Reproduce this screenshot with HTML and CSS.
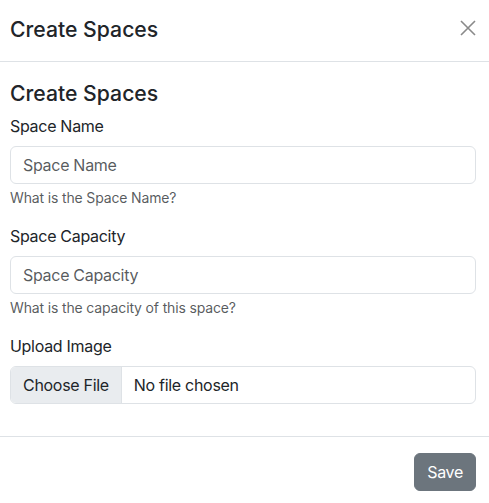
FILE: index.html
```html
<!DOCTYPE html>
<html lang="en">
<head>
<meta charset="utf-8">
<title>Create Spaces</title>
<link rel="stylesheet" href="styles.css">
</head>
<body>
<div class="modal">
  <div class="modal-header">
    <h5 class="modal-title">Create Spaces</h5>
    <button type="button" class="btn-close" aria-label="Close">
      <svg viewBox="0 0 16 16" width="16" height="16"><path d="M1 1 L15 15 M15 1 L1 15" stroke="currentColor" stroke-width="1.6" fill="none"/></svg>
    </button>
  </div>
  <div class="modal-body">
    <h4 class="section-title">Create Spaces</h4>
    <div class="field">
      <label class="form-label" for="name">Space Name</label>
      <input class="form-control" id="name" type="text" placeholder="Space Name">
      <div class="form-text">What is the Space Name?</div>
    </div>
    <div class="field">
      <label class="form-label" for="cap">Space Capacity</label>
      <input class="form-control" id="cap" type="text" placeholder="Space Capacity">
      <div class="form-text">What is the capacity of this space?</div>
    </div>
    <div class="field">
      <label class="form-label">Upload Image</label>
      <div class="file-control">
        <span class="file-btn">Choose File</span>
        <span class="file-name">No file chosen</span>
      </div>
    </div>
  </div>
  <div class="modal-footer">
    <button type="button" class="btn-save">Save</button>
  </div>
</div>
</body>
</html>
```
FILE: styles.css
```css
* { box-sizing: border-box; }
html, body {
  margin: 0;
  background: #fff;
}
body {
  font-family: Inter, "Liberation Sans", sans-serif;
  color: #212529;
  font-size: 16px;
  line-height: 1.5;
  letter-spacing: -0.3px;
}
.modal {
  width: 489px;
}
.modal-header {
  display: flex;
  align-items: flex-start;
  justify-content: space-between;
  height: 62px;
  padding: 14px 13px 0 10px;
  border-bottom: 1px solid #dee2e6;
}
.modal-title {
  margin: 0;
  font-size: 21.2px;
  font-weight: 500;
  line-height: 30px;
  letter-spacing: 0;
}
.btn-close {
  margin-top: 6px;
  padding: 0;
  border: 0;
  background: none;
  width: 16px;
  height: 16px;
  color: #8a8a8a;
  display: flex;
  cursor: pointer;
}
.modal-body {
  padding: 19px 13px 16px 10px;
}
.section-title {
  margin: 0 0 9px;
  font-size: 21.2px;
  font-weight: 500;
  line-height: 24px;
  letter-spacing: 0;
}
.field {
  margin-bottom: 16px;
}
.form-label {
  display: block;
  margin-bottom: 8px;
  line-height: 24px;
}
.form-control {
  display: block;
  width: 100%;
  height: 38px;
  padding: 6px 12px;
  font: inherit;
  letter-spacing: inherit;
  color: #212529;
  border: 1px solid #dee2e6;
  border-radius: 6px;
  background: #fff;
}
.form-control::placeholder {
  color: rgba(33, 37, 41, 0.75);
}
.form-text {
  margin-top: 3px;
  font-size: 14px;
  line-height: 21px;
  letter-spacing: -0.15px;
  color: rgba(33, 37, 41, 0.75);
}
.file-control {
  display: flex;
  height: 38px;
  border: 1px solid #dee2e6;
  border-radius: 6px;
  overflow: hidden;
}
.file-btn {
  display: flex;
  align-items: center;
  padding: 0 12px;
  background: #e9ecef;
  border-right: 1px solid #dee2e6;
}
.file-name {
  display: flex;
  align-items: center;
  padding: 0 12px;
}
.modal-footer {
  display: flex;
  justify-content: flex-end;
  padding: 12px 9px 12px 6px;
  border-top: 1px solid #dee2e6;
}
.btn-save {
  margin: 4px;
  height: 38px;
  padding: 6px 12px;
  font: inherit;
  letter-spacing: inherit;
  color: #fff;
  background: #6c757d;
  border: 1px solid #6c757d;
  border-radius: 6px;
}
```
